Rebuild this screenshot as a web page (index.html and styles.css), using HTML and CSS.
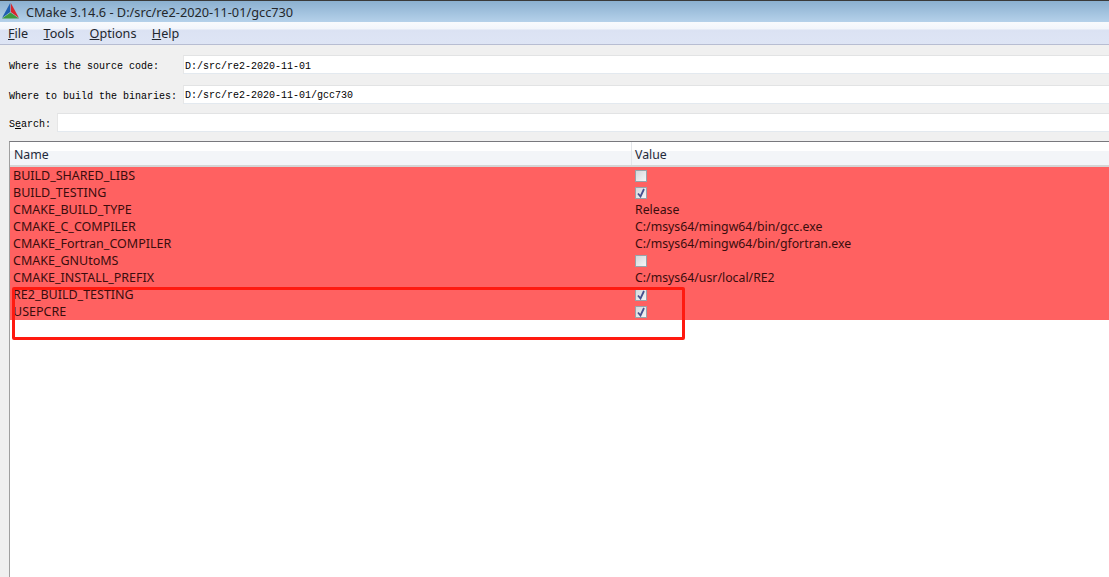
FILE: index.html
```html
<!DOCTYPE html>
<html lang="en">
<head>
<meta charset="utf-8">
<title>CMake</title>
<link rel="stylesheet" href="styles.css">
</head>
<body>
<div class="titlebar">
  <svg class="logo" width="17" height="16" viewBox="0 0 17 16">
    <polygon points="8.2,0 0,15 8.2,9" fill="#1f5fb0"/>
    <polygon points="8.8,0 17,15 8.8,9" fill="#d8262c"/>
    <polygon points="0,15.5 17,15.5 8.5,9.5" fill="#3f9a3c"/>
  </svg>
  <span>CMake 3.14.6 - D:/src/re2-2020-11-01/gcc730</span>
</div>
<nav class="menubar">
  <span class="menu"><u>F</u>ile</span>
  <span class="menu"><u>T</u>ools</span>
  <span class="menu"><u>O</u>ptions</span>
  <span class="menu"><u>H</u>elp</span>
</nav>
<main class="content">
  <div class="form-row row-source">
    <label class="label label-wide">Where is the source code:</label>
    <div class="field">D:/src/re2-2020-11-01</div>
  </div>
  <div class="form-row row-build">
    <label class="label label-wide">Where to build the binaries:</label>
    <div class="field">D:/src/re2-2020-11-01/gcc730</div>
  </div>
  <div class="form-row row-search">
    <label class="label label-search">S<u>e</u>arch:</label>
    <div class="field"></div>
  </div>
  <section class="table">
    <div class="thead">
      <div class="th th-name">Name</div>
      <div class="th">Value</div>
    </div>
    <div class="tr"><div class="td-name">BUILD_SHARED_LIBS</div><div class="td-value"><span class="check"></span></div></div>
    <div class="tr"><div class="td-name">BUILD_TESTING</div><div class="td-value"><span class="check"><svg viewBox="0 0 10 10" width="10" height="10"><path class="tick" d="M2 5.5 L4.5 8.5 L8 1"/></svg></span></div></div>
    <div class="tr"><div class="td-name">CMAKE_BUILD_TYPE</div><div class="td-value">Release</div></div>
    <div class="tr"><div class="td-name">CMAKE_C_COMPILER</div><div class="td-value">C:/msys64/mingw64/bin/gcc.exe</div></div>
    <div class="tr"><div class="td-name">CMAKE_Fortran_COMPILER</div><div class="td-value">C:/msys64/mingw64/bin/gfortran.exe</div></div>
    <div class="tr"><div class="td-name">CMAKE_GNUtoMS</div><div class="td-value"><span class="check"></span></div></div>
    <div class="tr"><div class="td-name">CMAKE_INSTALL_PREFIX</div><div class="td-value">C:/msys64/usr/local/RE2</div></div>
    <div class="tr"><div class="td-name">RE2_BUILD_TESTING</div><div class="td-value"><span class="check"><svg viewBox="0 0 10 10" width="10" height="10"><path class="tick" d="M2 5.5 L4.5 8.5 L8 1"/></svg></span></div></div>
    <div class="tr"><div class="td-name">USEPCRE</div><div class="td-value"><span class="check"><svg viewBox="0 0 10 10" width="10" height="10"><path class="tick" d="M2 5.5 L4.5 8.5 L8 1"/></svg></span></div></div>
  </section>
</main>
<div class="annotation"></div>
</body>
</html>
```
FILE: styles.css
```css
* { box-sizing: border-box; }
html, body { margin: 0; height: 100%; overflow: hidden; }
body {
  position: relative;
  width: 1109px;
  height: 577px;
  display: flex;
  flex-direction: column;
  background: #f0f0f0;
  font-family: "Noto Sans", Tahoma, sans-serif;
  font-size: 12.3px;
  color: #1a1a1a;
}
.titlebar {
  height: 22px;
  flex: none;
  border-top: 1px solid #3a3a3a;
  background: linear-gradient(#8bb0d0, #b5d1ea);
  display: flex;
  align-items: center;
  gap: 7px;
  padding-left: 2px;
  font-size: 12.75px;
  color: #24282c;
}
.logo { flex: none; margin-top: -2px; }
.menubar {
  height: 23px;
  flex: none;
  display: flex;
  align-items: center;
  gap: 15.4px;
  padding-left: 8px;
  background: linear-gradient(#f8fafd 0, #f2f5fb 7px, #dbe2f3 8px, #dee5f5 100%);
  border-bottom: 1px solid #b7bdd2;
  font-size: 12.6px;
  color: #22262e;
}
.content {
  flex: 1;
  min-height: 0;
  display: flex;
  flex-direction: column;
  padding: 10px 0 0 9px;
}
.form-row {
  display: flex;
  align-items: stretch;
  height: 19px;
  font-family: "Liberation Mono", monospace;
  font-size: 10px;
  color: #000;
}
.row-build { margin-top: 11px; }
.row-search { margin-top: 9px; }
.label { display: flex; align-items: center; flex: none; white-space: pre; padding-top: 4px; }
.row-build .label, .row-search .label { padding-top: 3px; }
.label-wide { width: 174px; }
.label-search { width: 48px; }
.field {
  flex: 1;
  background: #fff;
  border-top: 1px solid #e2e3e4;
  border-bottom: 1px solid #e3e9ef;
  border-left: 1px solid #e6e6e6;
  padding: 3px 0 0 1px;
  display: flex;
  align-items: center;
  color: #000;
}
.row-build .field { padding-top: 2px; }
.table {
  flex: 1;
  margin-top: 9px;
  background: #fff;
  border-top: 1px solid #78787d;
  border-left: 1px solid #a0a0a0;
}
.thead {
  display: flex;
  height: 25px;
  background: linear-gradient(#fff 0, #fff 9px, #f3f5f8 9px, #f3f5f8 100%);
  border-bottom: 2px solid #d5d5d5;
  color: #1f2a3a;
}
.th {
  display: flex;
  align-items: center;
  padding: 2px 0 0 3px;
}
.th-name {
  width: 622px;
  padding-left: 4px;
  border-right: 1px solid #e3e6ea;
}
.tr {
  display: flex;
  height: 17px;
  background: #ff6161;
  color: #3a0d0d;
  line-height: 17px;
}
.td-name { width: 623px; padding-left: 3px; white-space: nowrap; font-size: 12.5px; }
.td-value { flex: 1; padding-left: 2px; white-space: nowrap; display: flex; align-items: center; }
.check {
  width: 12px;
  height: 12px;
  margin-left: 0;
  display: block;
  background: linear-gradient(135deg, #d4d7dc, #f4f5f7);
  border: 1px solid #98a3aa;
}
.check svg { display: block; }
.tick { fill: none; stroke: #46508f; stroke-width: 1.8; }
.annotation {
  position: absolute;
  left: 12px;
  top: 287px;
  width: 673px;
  height: 53px;
  border: 3px solid #ff1a10;
  border-radius: 2px;
}
```
